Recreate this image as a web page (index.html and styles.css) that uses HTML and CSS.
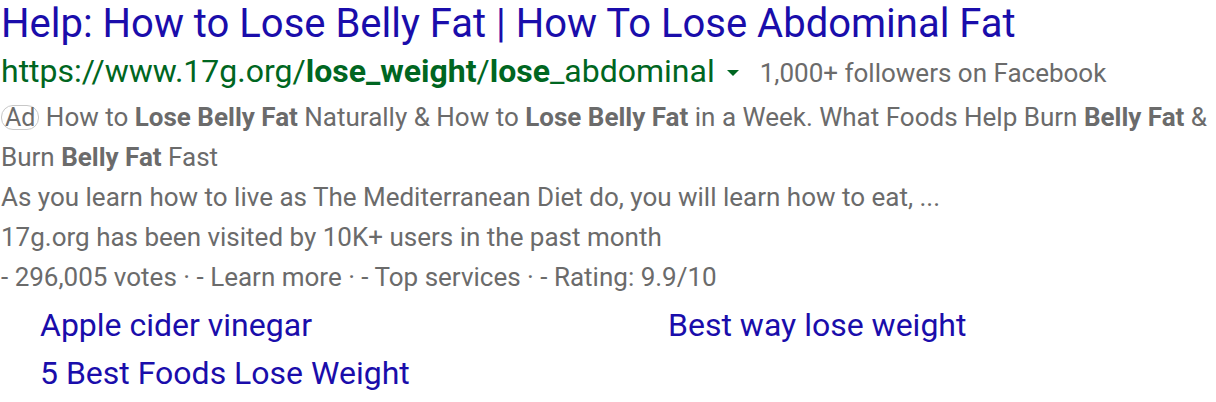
FILE: index.html
```html
<!DOCTYPE html>
<html>
<head>
<meta charset="utf-8">
<link rel="stylesheet" href="styles.css">
</head>
<body>
<div class="result">
  <a class="title" href="#">Help: How to Lose Belly Fat | How To Lose Abdominal Fat</a>
  <div class="urlrow">
    <span class="url">https://www.17g.org/<b>lose_weight</b>/<b>lose</b>_abdominal</span>
    <span class="caret"></span>
    <span class="followers">1,000+ followers on Facebook</span>
  </div>
  <div class="desc"><span class="ad">Ad</span> How to <b>Lose Belly Fat</b> Naturally &amp; How to <b>Lose Belly Fat</b> in a Week. What Foods Help Burn <b>Belly Fat</b> &amp; Burn <b>Belly Fat</b> Fast</div>
  <div class="line">As you learn how to live as The Mediterranean Diet do, you will learn how to eat, ...</div>
  <div class="line">17g.org has been visited by 10K+ users in the past month</div>
  <div class="line">- 296,005 votes · - Learn more · - Top services · - Rating: 9.9/10</div>
  <div class="sitelinks">
    <a href="#">Apple cider vinegar</a>
    <a href="#">Best way lose weight</a>
    <a href="#">5 Best Foods Lose Weight</a>
  </div>
</div>
</body>
</html>
```

FILE: styles.css
```css
html, body {
  margin: 0;
  padding: 0;
  background: #fff;
}
body {
  font-family: Roboto, "Liberation Sans", Arial, sans-serif;
}
.result {
  padding: 0 0 0 1px;
}
.title {
  display: block;
  color: #1a0dab;
  text-decoration: none;
  font-size: 40px;
  line-height: 48px;
}
.urlrow {
  display: flex;
  align-items: baseline;
  height: 40px;
  margin-top: 3px;
  line-height: 40px;
}
.url {
  color: #006621;
  font-size: 32px;
}
.url b {
  font-weight: 700;
}
.caret {
  align-self: center;
  width: 0;
  height: 0;
  border-left: 6px solid transparent;
  border-right: 6px solid transparent;
  border-top: 6px solid #006621;
  margin: 4px 21px 0 12px;
}
.followers {
  color: #6b6b6b;
  font-size: 26px;
}
.desc {
  margin-top: 6px;
}
.desc, .line {
  color: #6b6b6b;
  font-size: 26px;
  line-height: 40px;
}
.desc b {
  font-weight: 700;
}
.ad {
  display: inline-block;
  border: 1px solid #c8c8c8;
  border-radius: 12px;
  padding: 0 3px;
  font-size: 25px;
  line-height: 23px;
  color: #6b6b6b;
}
.sitelinks {
  display: grid;
  grid-template-columns: 628px 1fr;
  padding-left: 39px;
  margin-top: 4px;
}
.sitelinks a {
  color: #1a0dab;
  text-decoration: none;
  font-size: 32px;
  line-height: 48px;
}
```
